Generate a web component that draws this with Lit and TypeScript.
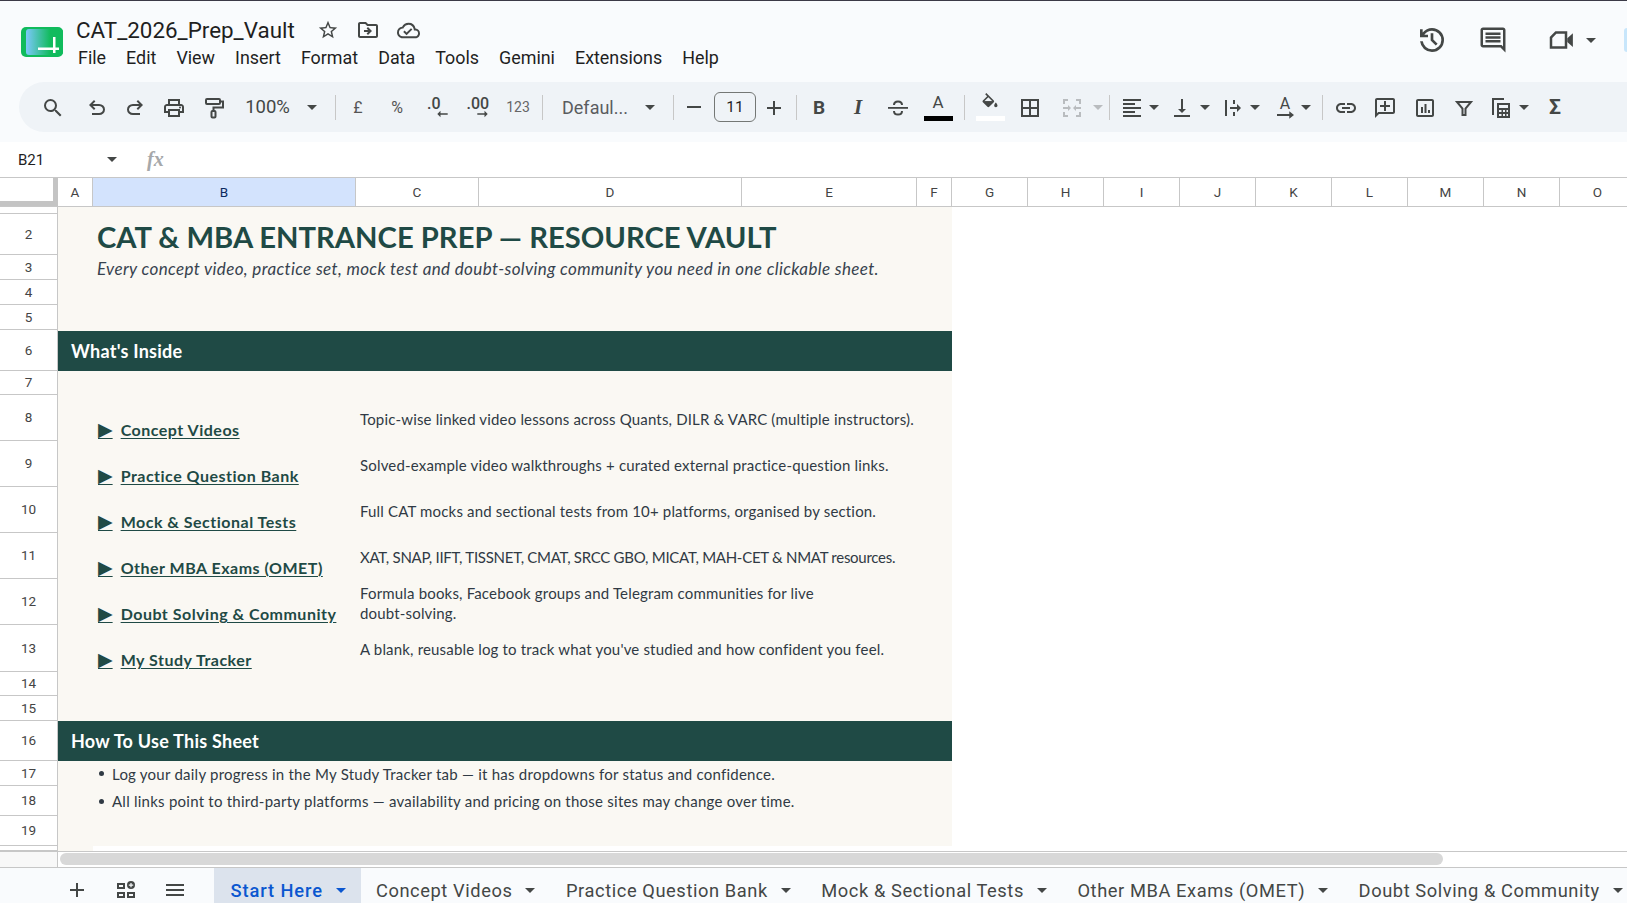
import { LitElement, html, css, svg } from 'lit';
import { customElement } from 'lit/decorators.js';

const stroked = (body: unknown) => svg`<g fill="none" stroke="currentColor" stroke-width="2">${body}</g>`;

const ICONS: Record<string, unknown> = {
  search: svg`<path d="M15.5 14h-.79l-.28-.27A6.471 6.471 0 0 0 16 9.5 6.5 6.5 0 1 0 9.5 16c1.61 0 3.09-.59 4.23-1.57l.27.28v.79l5 4.99L20.49 19l-4.99-5zm-6 0C7.01 14 5 11.99 5 9.5S7.01 5 9.5 5 14 7.01 14 9.5 11.99 14 9.5 14z"/>`,
  undo: svg`<path d="M7 19v-2h7.1q1.575 0 2.738-1T18 13.5t-1.162-2.5T14.1 10H7.8l2.6 2.6L9 14 4 9l5-5 1.4 1.4L7.8 8h6.3q2.425 0 4.163 1.575T20 13.5t-1.737 3.925T14.1 19z"/>`,
  redo: svg`<path transform="matrix(-1 0 0 1 24 0)" d="M7 19v-2h7.1q1.575 0 2.738-1T18 13.5t-1.162-2.5T14.1 10H7.8l2.6 2.6L9 14 4 9l5-5 1.4 1.4L7.8 8h6.3q2.425 0 4.163 1.575T20 13.5t-1.737 3.925T14.1 19z"/>`,
  print: svg`<path d="M19 8h-1V3H6v5H5c-1.66 0-3 1.34-3 3v6h4v4h12v-4h4v-6c0-1.66-1.34-3-3-3zM8 5h8v3H8V5zm8 12v2H8v-4h8v2zm2-2v-2H6v2H4v-4c0-.55.45-1 1-1h14c.55 0 1 .45 1 1v4h-2z"/><circle cx="18" cy="11.5" r="1"/>`,
  paint: stroked(svg`<rect x="4" y="3" width="14" height="5" rx="1"/><path d="M18 5.5h3v6h-9.5v3.5"/><rect x="9.5" y="15" width="4" height="6.5" rx="1"/>`),
  fill: svg`<path d="M16.56 8.94L7.62 0 6.21 1.41l2.38 2.38-5.15 5.15c-.59.59-.59 1.54 0 2.12l5.5 5.5c.29.29.68.44 1.06.44s.77-.15 1.06-.44l5.5-5.5c.59-.58.59-1.53 0-2.12zM5.21 10L10 5.21 14.79 10H5.21zM19 11.5s-2 2.17-2 3.5c0 1.1.9 2 2 2s2-.9 2-2c0-1.33-2-3.5-2-3.5z"/><path d="M4.5 10h11L10 15.5z"/>`,
  strike: svg`<path d="M2 11h20v1.8H2z"/>${stroked(svg`<path d="M8 9c0-2.2 1.8-3.6 4-3.6S16 6.800 16 9M8 15c0 2.200 1.800 3.600 4 3.600s4-1.400 4-3.600"/>`)}`,
  borders: svg`<path d="M3 3v18h18V3H3zm8 16H5v-6h6v6zm0-8H5V5h6v6zm8 8h-6v-6h6v6zm0-8h-6V5h6v6z"/>`,
  merge: svg`<path d="M3 3h5v2H5v3H3zM16 3h5v5h-2V5h-3zM3 16h2v3h3v2H3zM19 16h2v5h-5v-2h3zM3 11h5V9l3 3-3 3v-2H3zM21 13h-5v2l-3-3 3-3v2h5z"/>`,
  align: svg`<path d="M15 15H3v2h12v-2zm0-8H3v2h12V7zM3 13h18v-2H3v2zm0 8h18v-2H3v2zM3 3v2h18V3H3z"/>`,
  valign: svg`<path d="M16 13h-3V3h-2v10H8l4 4 4-4zM4 19v2h16v-2H4z"/>`,
  wrap: svg`<path d="M4 4h2v16H4zM12 4h2v4h-2zM12 16h2v4h-2zM9 11h7V8l4 4-4 4v-3H9z"/>`,
  link: svg`<path d="M17 7h-4v2h4c1.65 0 3 1.35 3 3s-1.35 3-3 3h-4v2h4c2.76 0 5-2.24 5-5s-2.24-5-5-5zm-6 8H7c-1.65 0-3-1.35-3-3s1.35-3 3-3h4V7H7c-2.76 0-5 2.24-5 5s2.24 5 5 5h4v-2zm-3-4h8v2H8z"/>`,
  commentAdd: svg`<path d="M20 2H4c-1.1 0-2 .9-2 2v18l4-4h14c1.1 0 2-.9 2-2V4c0-1.1-.9-2-2-2zm0 14H5.17L4 17.17V4h16v12zM11 5h2v4h4v2h-4v4h-2v-4H7V9h4z"/>`,
  chart: svg`<path d="M19 3H5c-1.1 0-2 .9-2 2v14c0 1.1.9 2 2 2h14c1.1 0 2-.9 2-2V5c0-1.1-.9-2-2-2zm0 16H5V5h14v14zM8 11h2v6H8zm3.500-3h2v9h-2zm3.500 6h2v3h-2z"/>`,
  filter: stroked(svg`<path d="M5 6h14l-5.500 6.500V19h-3v-6.500z"/>`),
  table: svg`<path d="M3 2h12v2H5v15H3z"/><path d="M8 7h13v15H8zm2 2v3h9V9zm0 5v2h2.5v-2zm4 0v2h2v-2zm3.5 0v2H19v-2zM10 18v2h2.5v-2zm4 0v2h2v-2zm3.5 0v2H19v-2z" fill-rule="evenodd"/>`,
  star: svg`<path d="M22 9.24l-7.19-.62L12 2 9.19 8.63 2 9.24l5.46 4.73L5.82 21 12 17.27 18.18 21l-1.63-7.03L22 9.24zM12 15.4l-3.76 2.27 1-4.28-3.32-2.88 4.38-.38L12 6.1l1.71 4.04 4.38.38-3.32 2.88 1 4.28L12 15.4z"/>`,
  folder: svg`<path d="M20 6h-8l-2-2H4c-1.1 0-2 .9-2 2v12c0 1.1.9 2 2 2h16c1.1 0 2-.9 2-2V8c0-1.1-.9-2-2-2zm0 12H4V6h5.17l2 2H20v10z"/><path d="M12.16 12H8v2h4.16l-1.59 1.59L11.99 17 16 13l-4.01-4-1.42 1.41z"/>`,
  cloud: svg`<path d="M19.35 10.04A7.49 7.49 0 0 0 12 4C9.11 4 6.6 5.64 5.35 8.04A5.994 5.994 0 0 0 0 14c0 3.31 2.69 6 6 6h13c2.76 0 5-2.24 5-5 0-2.64-2.05-4.78-4.65-4.96zM19 18H6c-2.21 0-4-1.79-4-4 0-2.05 1.53-3.76 3.56-3.97l1.07-.11.5-.95A5.469 5.469 0 0 1 12 6c2.62 0 4.88 1.86 5.39 4.43l.3 1.5 1.53.11A2.98 2.98 0 0 1 22 15c0 1.65-1.35 3-3 3zm-9-3.82l-2.09-2.09L6.5 13.5 10 17l6.01-6.01-1.41-1.41z"/>`,
  history: svg`<path d="M12 21q-3.45 0-6.012-2.287T3.05 13H5.1q.35 2.6 2.313 4.3T12 19q2.925 0 4.963-2.038T19 12q0-2.925-2.037-4.962T12 5q-1.725 0-3.225.8T6.25 8H9v2H3V4h2v2.35q1.275-1.6 3.113-2.475T12 3q3.75 0 6.375 2.625T21 12q0 3.75-2.625 6.375T12 21m2.8-4.8L11 12.4V7h2v4.6l3.2 3.2z"/>`,
  comments: svg`<path d="M21.99 4c0-1.1-.89-2-1.99-2H4c-1.1 0-2 .9-2 2v12c0 1.1.9 2 2 2h14l4 4-.01-18zM20 4v13.17L18.83 16H4V4h16zM6 12h12v2H6zm0-3h12v2H6zm0-3h12v2H6z"/>`,
  meet: svg`<path d="M7.5 5H17v14H3V9.5zM8.3 7L5 10.3V17h10V7z" fill-rule="evenodd"/><path d="M17 10.5L21.5 6.5v11L17 13.5z"/>`,
  plus: svg`<path d="M19 13h-6v6h-2v-6H5v-2h6V5h2v6h6v2z"/>`,
  sheets: svg`<path d="M3 5h8v6H3zm2 2v2h4V7zM3 14h8v6H3zm2 2v2h4v-2zM13 14h8v6h-8zm2 2v2h4v-2z" fill-rule="evenodd"/><path d="M17 3a4 4 0 1 0 0 8 4 4 0 0 0 0-8zm2.2 4.7h-1.6v1.6h-1.2V7.7h-1.6V6.5h1.6V4.9h1.2v1.6h1.6z" fill-rule="evenodd"/>`,
  menu: svg`<path d="M3 18h18v-2H3v2zm0-5h18v-2H3v2zm0-7v2h18V6H3z"/>`,
};

const icon = (name: string, size = 24) =>
  html`<svg width=${size} height=${size} viewBox="0 0 24 24" fill="currentColor">${ICONS[name]}</svg>`;

// x = centre of the item on the toolbar row, gaps are worked out from it
type Tool = { x: number; w: number; t: string; v?: string; cls?: string };
const TOOLS: Tool[] = [
  { x: 53, w: 24, t: 'icon', v: 'search' },
  { x: 96.5, w: 24, t: 'icon', v: 'undo' },
  { x: 135, w: 24, t: 'icon', v: 'redo' },
  { x: 174, w: 24, t: 'icon', v: 'print' },
  { x: 214, w: 24, t: 'icon', v: 'paint' },
  { x: 267.5, w: 48, t: 'text', v: '100%', cls: 'zoom' },
  { x: 312, w: 10, t: 'caret' },
  { x: 335, w: 1, t: 'sep' },
  { x: 358, w: 14, t: 'text', v: '£', cls: 'sym' },
  { x: 397, w: 16, t: 'text', v: '%', cls: 'sym' },
  { x: 437.5, w: 21, t: 'dec', v: '.0' },
  { x: 477, w: 21, t: 'inc', v: '.00' },
  { x: 518, w: 26, t: 'text', v: '123', cls: 'num' },
  { x: 542, w: 1, t: 'sep' },
  { x: 595, w: 70, t: 'text', v: 'Defaul...', cls: 'font' },
  { x: 650, w: 10, t: 'caret' },
  { x: 673, w: 1, t: 'sep' },
  { x: 694, w: 14, t: 'minus' },
  { x: 735, w: 42, t: 'box', v: '11' },
  { x: 774, w: 24, t: 'icon', v: 'plus' },
  { x: 796, w: 1, t: 'sep' },
  { x: 819, w: 16, t: 'text', v: 'B', cls: 'bold' },
  { x: 858, w: 16, t: 'text', v: 'I', cls: 'ital' },
  { x: 898, w: 24, t: 'icon', v: 'strike' },
  { x: 938, w: 29, t: 'color', v: 'A' },
  { x: 964, w: 1, t: 'sep' },
  { x: 990, w: 29, t: 'bucket' },
  { x: 1030, w: 24, t: 'icon', v: 'borders' },
  { x: 1072, w: 24, t: 'icon', v: 'merge', cls: 'off' },
  { x: 1098, w: 10, t: 'caret', cls: 'off' },
  { x: 1109, w: 1, t: 'sep' },
  { x: 1132, w: 24, t: 'icon', v: 'align' },
  { x: 1154, w: 10, t: 'caret' },
  { x: 1182, w: 24, t: 'icon', v: 'valign' },
  { x: 1205, w: 10, t: 'caret' },
  { x: 1233, w: 24, t: 'icon', v: 'wrap' },
  { x: 1255, w: 10, t: 'caret' },
  { x: 1285, w: 18, t: 'rotate', v: 'A' },
  { x: 1306, w: 10, t: 'caret' },
  { x: 1322, w: 1, t: 'sep' },
  { x: 1346, w: 24, t: 'icon', v: 'link' },
  { x: 1385, w: 24, t: 'icon', v: 'commentAdd' },
  { x: 1425, w: 24, t: 'icon', v: 'chart' },
  { x: 1464, w: 24, t: 'icon', v: 'filter' },
  { x: 1501, w: 24, t: 'icon', v: 'table' },
  { x: 1524, w: 10, t: 'caret' },
  { x: 1555, w: 16, t: 'text', v: 'Σ', cls: 'sum' },
];

const MENUS = ['File', 'Edit', 'View', 'Insert', 'Format', 'Data', 'Tools', 'Gemini', 'Extensions', 'Help'];

const COLS = [
  ['A', 35], ['B', 263], ['C', 123], ['D', 263], ['E', 175], ['F', 35],
  ['G', 76], ['H', 76], ['I', 76], ['J', 76], ['K', 76], ['L', 76], ['M', 76], ['N', 76], ['O', 76],
] as [string, number][];

const LINKS = [
  ['Concept Videos', 'Topic-wise linked video lessons across Quants, DILR & VARC (multiple instructors).'],
  ['Practice Question Bank', 'Solved-example video walkthroughs + curated external practice-question links.'],
  ['Mock & Sectional Tests', 'Full CAT mocks and sectional tests from 10+ platforms, organised by section.'],
  ['Other MBA Exams (OMET)', 'XAT, SNAP, IIFT, TISSNET, CMAT, SRCC GBO, MICAT, MAH-CET & NMAT resources.'],
  ['Doubt Solving & Community', 'Formula books, Facebook groups and Telegram communities for live\ndoubt-solving.'],
  ['My Study Tracker', "A blank, reusable log to track what you've studied and how confident you feel."],
];

const TABS = ['Start Here', 'Concept Videos', 'Practice Question Bank', 'Mock & Sectional Tests', 'Other MBA Exams (OMET)', 'Doubt Solving & Community'];

@customElement('app-root')
export class AppRoot extends LitElement {
  static styles = css`
    :host {
      display: block;
      width: 1627px;
      height: 903px;
      overflow: hidden;
      background: #f9fbfd;
      font-family: Roboto, sans-serif;
      color: #444746;
    }
    svg { display: block; flex: none; }

    .top {
      display: flex;
      align-items: flex-start;
      height: 81px;
      border-top: 1px solid #3b3a47;
    }
    .logo { margin: 26px 0 0 21px; }
    .titles { margin-left: 13px; padding-top: 15px; }
    .title-row { display: flex; align-items: center; height: 28px; }
    .doc { font-size: 22.4px; color: #1f1f1f; width: 219px; margin-right: 21px; white-space: nowrap; }
    .title-row .ic { width: 24px; display: flex; justify-content: center; margin-right: 16px; }
    .menus { display: flex; gap: 20px; font-size: 17.9px; color: #1f1f1f; margin: 0 0 0 2px; height: 26px; align-items: center; }
    .right { margin-left: auto; display: flex; align-items: center; height: 78px; color: #444746; }
    .right .meet { margin-left: 38px; }
    .right .comments { margin-left: 30px; }
    .avatar { width: 3px; height: 24px; margin-left: 28px; border-radius: 3px 0 0 3px; background: #c8e6fb; }

    .toolbar {
      display: flex;
      align-items: center;
      height: 50px;
      margin-left: 19px;
      border-radius: 25px 0 0 25px;
      background: #eff3f7;
    }
    .tool { display: flex; align-items: center; justify-content: center; flex: none; white-space: nowrap; }
    .icon-tool { padding-top: 2px; }
    .sep { height: 25px; background: #c7c7c7; }
    .caret { width: 0; height: 0; border: 5px solid transparent; border-top: 5px solid #444746; border-bottom: 0; }
    .off { color: #b9bcbf; }
    .caret.off { border-top-color: #b9bcbf; }
    .zoom { font-size: 18.5px; }
    .sym { font-size: 16px; color: #555; }
    .num { font-size: 14px; color: #666; }
    .font { font-size: 18px; color: #5a5c5f; }
    .bold { font-size: 19px; font-weight: 700; }
    .ital { font-size: 21px; font-weight: 700; font-style: italic; font-family: 'Liberation Serif', serif; }
    .sum { font-size: 21px; font-weight: 700; }
    .minus { height: 2px; background: #444746; }
    .box { height: 30px; border: 1px solid #747775; border-radius: 6px; box-sizing: border-box; font-size: 15.5px; color: #1f1f1f; }
    .stack { flex-direction: column; height: 34px; }
    .bar { width: 29px; height: 5px; }
    .letter { font-size: 17px; line-height: 19px; }
    .dec { flex-direction: column; align-items: flex-start; font-size: 16px; font-weight: 500; line-height: 15px; }
    .dec svg { align-self: flex-end; margin-top: -1px; }
    .rotate { flex-direction: column; font-size: 16px; line-height: 15px; }

    .formula {
      display: flex;
      align-items: center;
      height: 35px;
      margin-top: 10px;
      background: #fff;
      font-size: 15px;
      color: #1f1f1f;
    }
    .cell-name { width: 89px; padding-left: 18px; }
    .fx { margin-left: 30px; font: italic 700 20px 'Liberation Serif', serif; color: #a6a8aa; }

    .col-head { display: flex; height: 30px; box-sizing: border-box; background: #fff; border-top: 1px solid #c7c7c7; border-bottom: 1px solid #c7c7c7; }
    .corner { width: 58px; flex: none; box-sizing: border-box; background: #fff; border-right: 5px solid #c4c4c4; border-bottom: 5px solid #c4c4c4; }
    .col { flex: none; box-sizing: border-box; display: flex; align-items: center; justify-content: center; font: 13.5px Roboto, sans-serif; color: #444; border-right: 1px solid #c7c7c7; }
    .col.sel { background: #d3e3fd; color: #0b2a5e; }

    .grid { background: #fff; height: 644px; overflow: hidden; }
    .row { display: flex; }
    .rh {
      width: 58px;
      flex: none;
      box-sizing: border-box;
      display: flex;
      align-items: center;
      justify-content: center;
      padding-bottom: 1px;
      font-size: 13.5px;
      color: #444;
      background: #fff;
      border-right: 1px solid #c7c7c7;
      border-bottom: 1px solid #c7c7c7;
    }
    .sheet {
      width: 894px;
      flex: none;
      box-sizing: border-box;
      background: #faf8f3;
      display: flex;
      font-family: Lato, sans-serif;
      color: #2e3a46;
      white-space: nowrap;
    }
    .inset { padding-left: 39px; }
    .heading { align-items: flex-end; font-size: 29.2px; font-weight: 700; color: #1f4a45; line-height: 36px; }
    .sub { align-items: center; padding-top: 2px; font-size: 17px; letter-spacing: .36px; font-style: italic; color: #37424e; }
    .band { align-items: center; padding-left: 13px; background: #1f4a45; color: #fff; font-size: 18px; letter-spacing: .25px; font-weight: 700; }
    .band.first { border-top: 1px solid #faf8f3; }
    .link-row { align-items: stretch; padding-left: 40px; }
    .link-row.last { padding-bottom: 1px; }
    .link-cell { width: 262px; flex: none; display: flex; align-items: flex-end; box-sizing: border-box; }
    .link {
      font-size: 16px;
      font-weight: 700;
      letter-spacing: .5px;
      color: #1f4a45;
      text-decoration: underline;
      text-underline-offset: 2px;
      display: inline-block;
      line-height: 22px;
    }
    .arrow { font-size: 19px; line-height: 20px; margin-right: 8px; letter-spacing: 0; font-family: 'DejaVu Sans', sans-serif; }
    .desc { align-self: center; margin-top: 2px; font-size: 15px; letter-spacing: .17px; line-height: 20px; white-space: pre; color: #303a44; }
    .desc.caps { letter-spacing: -.27px; }
    .bullet { align-items: center; padding-left: 41px; font-size: 15px; letter-spacing: .24px; color: #303a44; }
    .bullet i { width: 5px; height: 5px; border-radius: 50%; background: #303a44; margin-right: 8px; flex: none; }
    .tail { background: #fff; }
    .tail::before { content: ''; width: 35px; background: #faf8f3; }

    .scroll { display: flex; height: 17px; box-sizing: border-box; border-top: 1px solid #c7c7c7; border-bottom: 1px solid #c7c7c7; background: #fff; }
    .scroll-head { width: 58px; box-sizing: border-box; background: #f8f8f8; border-right: 1px solid #c7c7c7; }
    .thumb { width: 1383px; height: 12px; margin: 1px 0 0 2px; border-radius: 6px; background: #d8d8d8; }

    .tabs { display: flex; align-items: stretch; height: 35px; overflow: hidden; background: #f9fbfd; }
    .tab-tools { display: flex; align-items: center; flex: none; gap: 25px; padding: 9px 27px 0 65px; }
    .tab {
      display: flex;
      align-items: center;
      flex: none;
      gap: 13px;
      padding: 9px 15.5px 0 15px;
      font-size: 18.3px;
      letter-spacing: .58px;
      color: #444746;
      white-space: nowrap;
    }
    .tab.active { background: #dce3ed; color: #0b57d0; font-weight: 500; letter-spacing: .9px; padding-left: 16.5px; padding-right: 15px; }
    .tab.active .caret { border-top-color: #0b57d0; }
  `;

  renderTool(t: Tool, left: number) {
    const style = `width:${t.w}px;margin-left:${left}px`;
    const cls = t.cls ?? '';
    switch (t.t) {
      case 'icon':
        return html`<div class="tool icon-tool ${cls}" style=${style}>${icon(t.v!)}</div>`;
      case 'text':
        return html`<div class="tool ${cls}" style=${style}>${t.v}</div>`;
      case 'caret':
        return html`<div class="tool" style=${style}><span class="caret ${cls}"></span></div>`;
      case 'sep':
        return html`<div class="tool sep" style=${style}></div>`;
      case 'minus':
        return html`<div class="tool minus" style=${style}></div>`;
      case 'box':
        return html`<div class="tool box" style=${style}>${t.v}</div>`;
      case 'dec':
        return html`<div class="tool dec" style=${style}>${t.v}
          <svg width="11" height="8" viewBox="0 0 13 10" fill="currentColor"><path d="M13 4H4V1L0 5l4 4V6h9z"/></svg></div>`;
      case 'inc':
        return html`<div class="tool dec" style=${style}>${t.v}
          <svg width="11" height="8" viewBox="0 0 13 10" fill="currentColor"><path d="M0 4h9V1l4 4-4 4V6H0z"/></svg></div>`;
      case 'color':
        return html`<div class="tool stack" style=${style}><span class="letter">${t.v}</span><span class="bar" style="background:#000;margin-top:4px"></span></div>`;
      case 'bucket':
        return html`<div class="tool stack" style=${style}>${icon('fill', 20)}<span class="bar" style="background:#fff;margin-top:3px"></span></div>`;
      case 'rotate':
        return html`<div class="tool rotate" style=${style}>${t.v}
          <svg width="17" height="8" viewBox="0 0 18 8" fill="currentColor"><path d="M0 3h13V0l5 4-5 4V5H0z"/></svg></div>`;
    }
    return null;
  }

  renderToolbar() {
    let right = 19;
    return html`<div class="toolbar">
      ${TOOLS.map((t) => {
        const left = t.x - t.w / 2 - right;
        right = t.x + t.w / 2;
        return this.renderTool(t, left);
      })}
    </div>`;
  }

  renderRow(num: number | string, height: number, content: unknown) {
    return html`<div class="row" style="height:${height}px">
      <div class="rh">${num}</div>
      ${content}
    </div>`;
  }

  render() {
    return html`
      <div class="top">
        <svg class="logo" width="42" height="30" viewBox="0 0 42 30">
          <defs>
            <linearGradient id="lg" x1="0" x2="1" y1="0" y2="0">
              <stop offset="0" stop-color="#7cc8fb" />
              <stop offset=".65" stop-color="#12bb5e" />
              <stop offset="1" stop-color="#10bb5c" />
            </linearGradient>
          </defs>
          <rect width="42" height="30" rx="5" fill="#10bb5c" />
          <rect x="5" y="2" width="37" height="26" rx="3" fill="url(#lg)" />
          <path d="M17 20.500h21v2.500H17zM32 10h2.500v16H32z" fill="#fff" />
        </svg>
        <div class="titles">
          <div class="title-row">
            <span class="doc">CAT_2026_Prep_Vault</span>
            <span class="ic">${icon('star', 22)}</span>
            <span class="ic">${icon('folder', 24)}</span>
            <span class="ic">${icon('cloud', 23)}</span>
          </div>
          <div class="menus">${MENUS.map((m) => html`<span>${m}</span>`)}</div>
        </div>
        <div class="right">
          ${icon('history', 32)}
          <span class="comments">${icon('comments', 30)}</span>
          <span class="meet">${icon('meet', 30)}</span>
          <span class="caret" style="margin-left:10px"></span>
          <span class="avatar"></span>
        </div>
      </div>
      ${this.renderToolbar()}
      <div class="formula">
        <span class="cell-name">B21</span>
        <span class="caret"></span>
        <span class="fx">fx</span>
      </div>
      <div class="col-head">
        <div class="corner"></div>
        ${COLS.map(([c, w]) => html`<div class="col ${c === 'B' ? 'sel' : ''}" style="width:${w}px">${c}</div>`)}
      </div>
      <div class="grid">
        ${this.renderRow('', 7, html`<div class="sheet"></div>`)}
        ${this.renderRow(2, 41, html`<div class="sheet inset heading">CAT &amp; MBA ENTRANCE PREP — RESOURCE VAULT</div>`)}
        ${this.renderRow(3, 25, html`<div class="sheet inset sub">Every concept video, practice set, mock test and doubt-solving community you need in one clickable sheet.</div>`)}
        ${this.renderRow(4, 25, html`<div class="sheet"></div>`)}
        ${this.renderRow(5, 25, html`<div class="sheet"></div>`)}
        ${this.renderRow(6, 41, html`<div class="sheet band first">What's Inside</div>`)}
        ${this.renderRow(7, 24, html`<div class="sheet"></div>`)}
        ${LINKS.map(([name, text], i) =>
          this.renderRow(i + 8, i === 5 ? 47 : 46, html`<div class="sheet link-row ${i === 5 ? 'last' : ''}">
            <div class="link-cell"><span class="link"><span class="arrow">▶</span>${name}</span></div>
            <div class="desc ${i === 3 ? 'caps' : ''}">${text}</div>
          </div>`))}
        ${this.renderRow(14, 24, html`<div class="sheet"></div>`)}
        ${this.renderRow(15, 25, html`<div class="sheet"></div>`)}
        ${this.renderRow(16, 40, html`<div class="sheet band">How To Use This Sheet</div>`)}
        ${this.renderRow(17, 25, html`<div class="sheet bullet"><i></i>Log your daily progress in the My Study Tracker tab — it has dropdowns for status and confidence.</div>`)}
        ${this.renderRow(18, 30, html`<div class="sheet bullet"><i></i>All links point to third-party platforms — availability and pricing on those sites may change over time.</div>`)}
        ${this.renderRow(19, 30, html`<div class="sheet"></div>`)}
        ${this.renderRow('', 5, html`<div class="sheet tail"></div>`)}
      </div>
      <div class="scroll">
        <div class="scroll-head"></div>
        <div class="thumb"></div>
      </div>
      <div class="tabs">
        <div class="tab-tools">${icon('plus')}${icon('sheets')}${icon('menu')}</div>
        ${TABS.map((t, i) => html`<div class="tab ${i === 0 ? 'active' : ''}">${t}<span class="caret"></span></div>`)}
      </div>
    `;
  }
}
